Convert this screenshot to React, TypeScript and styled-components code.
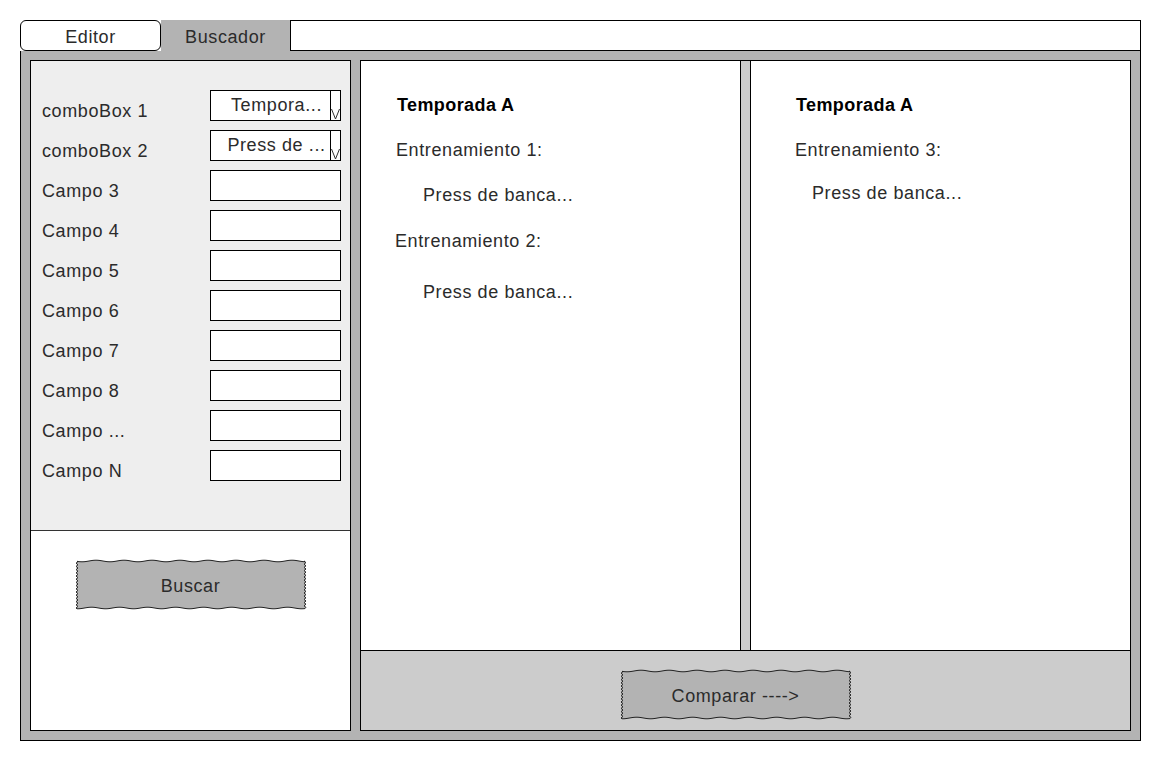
import styled, { createGlobalStyle } from 'styled-components';

const GlobalStyle = createGlobalStyle`
  body {
    margin: 0;
    background: #ffffff;
    font-family: 'Liberation Sans', Arial, sans-serif;
  }
  * {
    box-sizing: border-box;
  }
`;

const Window = styled.div`
  margin: 20px 0 0 20px;
  width: 1121px;
  font-size: 18px;
  letter-spacing: 0.6px;
  color: #2b2b2b;
`;

const TabBar = styled.div`
  display: flex;
  height: 31px;
`;

const Tab = styled.div<{ $active?: boolean }>`
  display: flex;
  align-items: center;
  justify-content: center;
  line-height: 20px;
  width: ${(p) => (p.$active ? '129px' : '141px')};
  background: ${(p) => (p.$active ? '#b3b3b3' : '#ffffff')};
  border: ${(p) => (p.$active ? 'none' : '1px solid #000')};
  border-radius: ${(p) => (p.$active ? '0' : '6px')};
  padding-top: 2px;
`;

const TabFiller = styled.div`
  flex: 1;
  background: #ffffff;
  border: 1px solid #000;
`;

const Frame = styled.div`
  display: flex;
  gap: 9px;
  height: 690px;
  padding: 9px;
  background: #b3b3b3;
  border: 1px solid #000;
  border-top: none;
`;

const SearchPanel = styled.div`
  display: flex;
  flex-direction: column;
  width: 321px;
  border: 1px solid #000;
  background: #ffffff;
`;

const FormArea = styled.div`
  display: flex;
  flex-direction: column;
  gap: 9px;
  height: 470px;
  padding: 29px 9px 0 11px;
  background: #eeeeee;
  border-bottom: 1px solid #333;
`;

const FormRow = styled.div`
  display: flex;
  justify-content: space-between;
  height: 31px;
`;

const FieldLabel = styled.span`
  margin-top: 11px;
  line-height: 20px;
  white-space: nowrap;
`;

const TextField = styled.div`
  width: 131px;
  height: 31px;
  background: #ffffff;
  border: 1px solid #000;
`;

const ComboBox = styled(TextField)`
  display: flex;
`;

const ComboText = styled.span`
  flex: 1;
  padding-left: 12px;
  line-height: 28px;
  text-align: center;
  white-space: nowrap;
  overflow: hidden;
`;

const ComboArrow = styled.span`
  display: flex;
  align-items: flex-end;
  justify-content: center;
  width: 10px;
  border-left: 1px solid #000;
`;

const ButtonArea = styled.div`
  flex: 1;
  display: flex;
  justify-content: center;
  align-items: flex-start;
  padding-top: 28px;
`;

const CompareArea = styled.div`
  display: flex;
  flex-direction: column;
  width: 771px;
  border: 1px solid #000;
  background: #cccccc;
`;

const PanelsRow = styled.div`
  display: flex;
  gap: 9px;
  height: 589px;
`;

const ResultPanel = styled.div<{ $side: 'left' | 'right'; $pad: number }>`
  flex: none;
  width: 380px;
  display: flex;
  flex-direction: column;
  background: #ffffff;
  padding: 34px 0 0 ${(p) => p.$pad}px;
  border-${(p) => (p.$side === 'left' ? 'right' : 'left')}: 1px solid #000;
`;

const Line = styled.div<{ $bold?: boolean; $indent?: number; $gap?: number }>`
  line-height: 20px;
  margin-top: ${(p) => p.$gap ?? 0}px;
  margin-left: ${(p) => p.$indent ?? 0}px;
  font-weight: ${(p) => (p.$bold ? 700 : 400)};
  letter-spacing: ${(p) => (p.$bold ? '0.4px' : 'inherit')};
  color: ${(p) => (p.$bold ? '#000' : 'inherit')};
`;

const BottomBar = styled.div`
  flex: 1;
  display: flex;
  justify-content: center;
  align-items: flex-start;
  padding: 18px 20px 0 0;
  border-top: 1px solid #000;
`;

const SketchButton = styled.button`
  position: relative;
  width: 232px;
  height: 51px;
  padding: 4px 0 0;
  border: none;
  background: transparent;
  font: inherit;
  letter-spacing: inherit;
  color: inherit;
  cursor: pointer;
`;

const ButtonShape = styled.svg`
  position: absolute;
  inset: 0;
`;

const ButtonText = styled.span`
  position: relative;
`;

function wavyPath(w: number, h: number): string {
  const m = 2;
  const pts: string[] = [];
  for (let x = m; x <= w - m; x += 2) {
    pts.push(`${x} ${(m + Math.sin((x / 28) * Math.PI * 2) * 0.8).toFixed(2)}`);
  }
  for (let y = m, i = 0; y <= h - m; y += 1.6, i++) {
    pts.push(`${(w - m + (i % 2 ? 1 : -1)).toFixed(2)} ${y.toFixed(2)}`);
  }
  for (let x = w - m; x >= m; x -= 2) {
    pts.push(`${x} ${(h - m + Math.sin((x / 28) * Math.PI * 2 + 1) * 0.8).toFixed(2)}`);
  }
  for (let y = h - m, i = 0; y >= m; y -= 1.6, i++) {
    pts.push(`${(m + (i % 2 ? 1 : -1)).toFixed(2)} ${y.toFixed(2)}`);
  }
  return `M ${pts.join(' L ')} Z`;
}

function WavyButton({ children }: { children: React.ReactNode }): JSX.Element {
  return (
    <SketchButton>
      <ButtonShape width={232} height={51} viewBox="0 0 232 51">
        <path d={wavyPath(232, 51)} fill="#b3b3b3" stroke="#222" strokeWidth={1} />
      </ButtonShape>
      <ButtonText>{children}</ButtonText>
    </SketchButton>
  );
}

const fields = ['Campo 3', 'Campo 4', 'Campo 5', 'Campo 6', 'Campo 7', 'Campo 8', 'Campo ...', 'Campo N'];

function Combo({ value }: { value: string }): JSX.Element {
  return (
    <ComboBox>
      <ComboText>{value}</ComboText>
      <ComboArrow>
        <svg width="9" height="12" viewBox="0 0 9 12">
          <path d="M0.5 1 L4.5 11 L8.5 1" fill="none" stroke="#333" strokeWidth={1} />
        </svg>
      </ComboArrow>
    </ComboBox>
  );
}

function App(): JSX.Element {
  return (
    <Window>
      <GlobalStyle />
      <TabBar>
        <Tab>Editor</Tab>
        <Tab $active>Buscador</Tab>
        <TabFiller />
      </TabBar>
      <Frame>
        <SearchPanel>
          <FormArea>
            <FormRow>
              <FieldLabel>comboBox 1</FieldLabel>
              <Combo value="Tempora..." />
            </FormRow>
            <FormRow>
              <FieldLabel>comboBox 2</FieldLabel>
              <Combo value="Press de ..." />
            </FormRow>
            {fields.map((f) => (
              <FormRow key={f}>
                <FieldLabel>{f}</FieldLabel>
                <TextField />
              </FormRow>
            ))}
          </FormArea>
          <ButtonArea>
            <WavyButton>Buscar</WavyButton>
          </ButtonArea>
        </SearchPanel>
        <CompareArea>
          <PanelsRow>
            <ResultPanel $side="left" $pad={36}>
              <Line $bold>Temporada A</Line>
              <Line $gap={25} $indent={-1}>Entrenamiento 1:</Line>
              <Line $gap={25} $indent={26}>Press de banca...</Line>
              <Line $gap={26} $indent={-2}>Entrenamiento 2:</Line>
              <Line $gap={31} $indent={26}>Press de banca...</Line>
            </ResultPanel>
            <ResultPanel $side="right" $pad={45}>
              <Line $bold>Temporada A</Line>
              <Line $gap={25} $indent={-1}>Entrenamiento 3:</Line>
              <Line $gap={23} $indent={16}>Press de banca...</Line>
            </ResultPanel>
          </PanelsRow>
          <BottomBar>
            <WavyButton>Comparar ----&gt;</WavyButton>
          </BottomBar>
        </CompareArea>
      </Frame>
    </Window>
  );
}

export default App;
